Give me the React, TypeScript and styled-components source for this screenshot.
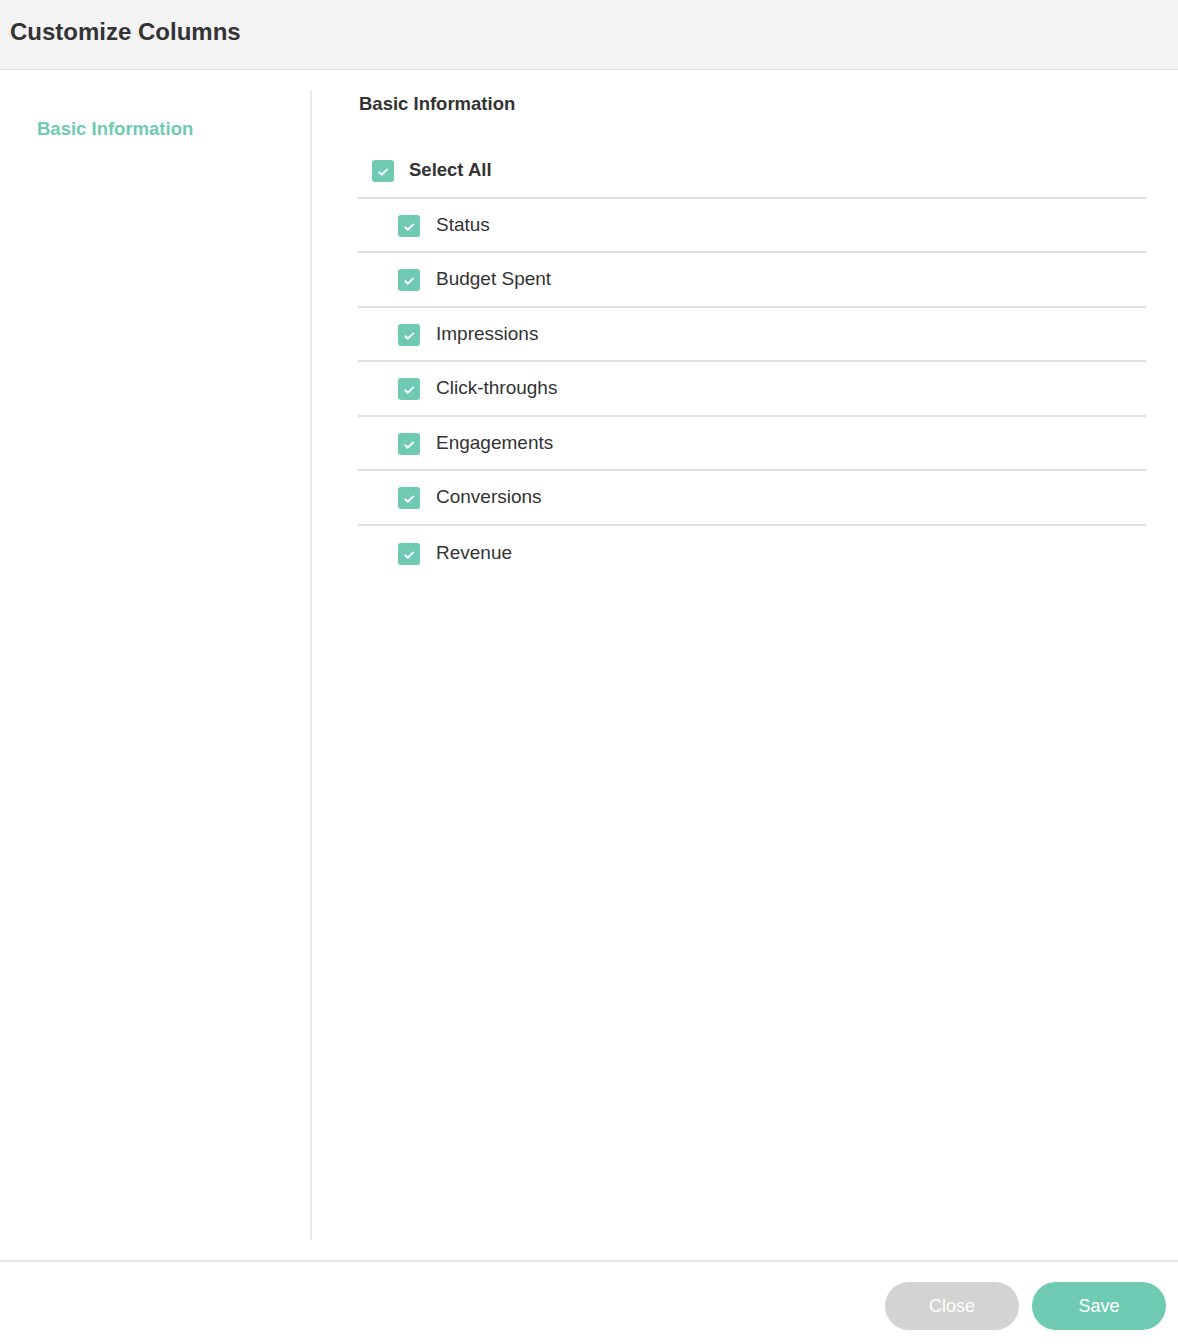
import React from "react";
import styled, { createGlobalStyle } from "styled-components";

const teal = "#6fcab3";

const columns = [
  "Status",
  "Budget Spent",
  "Impressions",
  "Click-throughs",
  "Engagements",
  "Conversions",
  "Revenue",
];

const Check = () => (
  <Box>
    <svg width="22" height="22" viewBox="0 0 22 22">
      <path
        d="M7.3 12.3 L9.9 14.7 L15.2 9.4"
        fill="none"
        stroke="#fff"
        strokeWidth="1.9"
        strokeLinecap="round"
        strokeLinejoin="round"
      />
    </svg>
  </Box>
);

const App: React.FC = () => {
  return (
    <Modal>
      <Global />
      <Header>
        <Title>Customize Columns</Title>
      </Header>
      <Body>
        <Sidebar>
          <NavItem>Basic Information</NavItem>
        </Sidebar>
        <Main>
          <SectionTitle>Basic Information</SectionTitle>
          <List>
            <Row $head>
              <Check />
              <Label $bold>Select All</Label>
            </Row>
            {columns.map((c, i) => (
              <Row key={c} $last={i === columns.length - 1}>
                <Check />
                <Label>{c}</Label>
              </Row>
            ))}
          </List>
        </Main>
      </Body>
      <Footer>
        <Button $bg="#d3d3d3">Close</Button>
        <Button $bg={teal}>Save</Button>
      </Footer>
    </Modal>
  );
};

export default App;

const Global = createGlobalStyle`
  body {
    margin: 0;
    background: #fff;
    font-family: "Liberation Sans", Arial, sans-serif;
    color: #333;
  }
`;

const Modal = styled.div`
  height: 1344px;
  display: flex;
  flex-direction: column;
`;

const Header = styled.div`
  height: 69px;
  background: #f3f3f3;
  border-bottom: 1px solid #e4e4e4;
  display: flex;
  align-items: center;
  padding: 0 10px;
`;

const Title = styled.div`
  font-size: 24px;
  font-weight: 700;
  color: #333;
  margin-top: -5px;
`;

const Body = styled.div`
  flex: 1;
  display: flex;
  padding: 20px 0;
`;

const Sidebar = styled.div`
  width: 312px;
  border-right: 2px solid #ebebeb;
  padding: 28px 0 0 37px;
  box-sizing: border-box;
`;

const NavItem = styled.div`
  font-size: 18.5px;
  line-height: 22px;
  font-weight: 700;
  color: ${teal};
`;

const Main = styled.div`
  flex: 1;
  padding: 3px 32px 0 46px;
`;

const SectionTitle = styled.div`
  font-size: 18.5px;
  font-weight: 700;
  color: #333;
  padding-left: 1px;
  height: 22px;
  line-height: 22px;
`;

const List = styled.div`
  margin-top: 29px;
`;

const Row = styled.div<{ $head?: boolean; $last?: boolean }>`
  display: flex;
  align-items: center;
  gap: ${(p) => (p.$head ? 15 : 16)}px;
  height: 54.5px;
  padding-left: ${(p) => (p.$head ? 14 : 40)}px;
  border-bottom: ${(p) => (p.$last ? "none" : "2px solid #e0e0e0")};
  box-sizing: border-box;
`;

const Box = styled.span`
  width: 22px;
  height: 22px;
  border-radius: 3px;
  background: ${teal};
  display: inline-flex;
  flex-shrink: 0;
  margin-top: 2px;
`;

const Label = styled.span<{ $bold?: boolean }>`
  font-size: ${(p) => (p.$bold ? 18.5 : 19)}px;
  font-weight: ${(p) => (p.$bold ? 700 : 400)};
  color: #333;
`;

const Footer = styled.div`
  height: 84px;
  border-top: 2px solid #e6e6e6;
  display: flex;
  justify-content: flex-end;
  gap: 13px;
  padding: 20px 12px 0 0;
  box-sizing: border-box;
`;

const Button = styled.button<{ $bg: string }>`
  width: 134px;
  height: 48px;
  border: none;
  border-radius: 24px;
  background: ${(p) => p.$bg};
  color: #fff;
  font-family: "Liberation Sans", Arial, sans-serif;
  font-size: 18px;
  cursor: pointer;
`;
